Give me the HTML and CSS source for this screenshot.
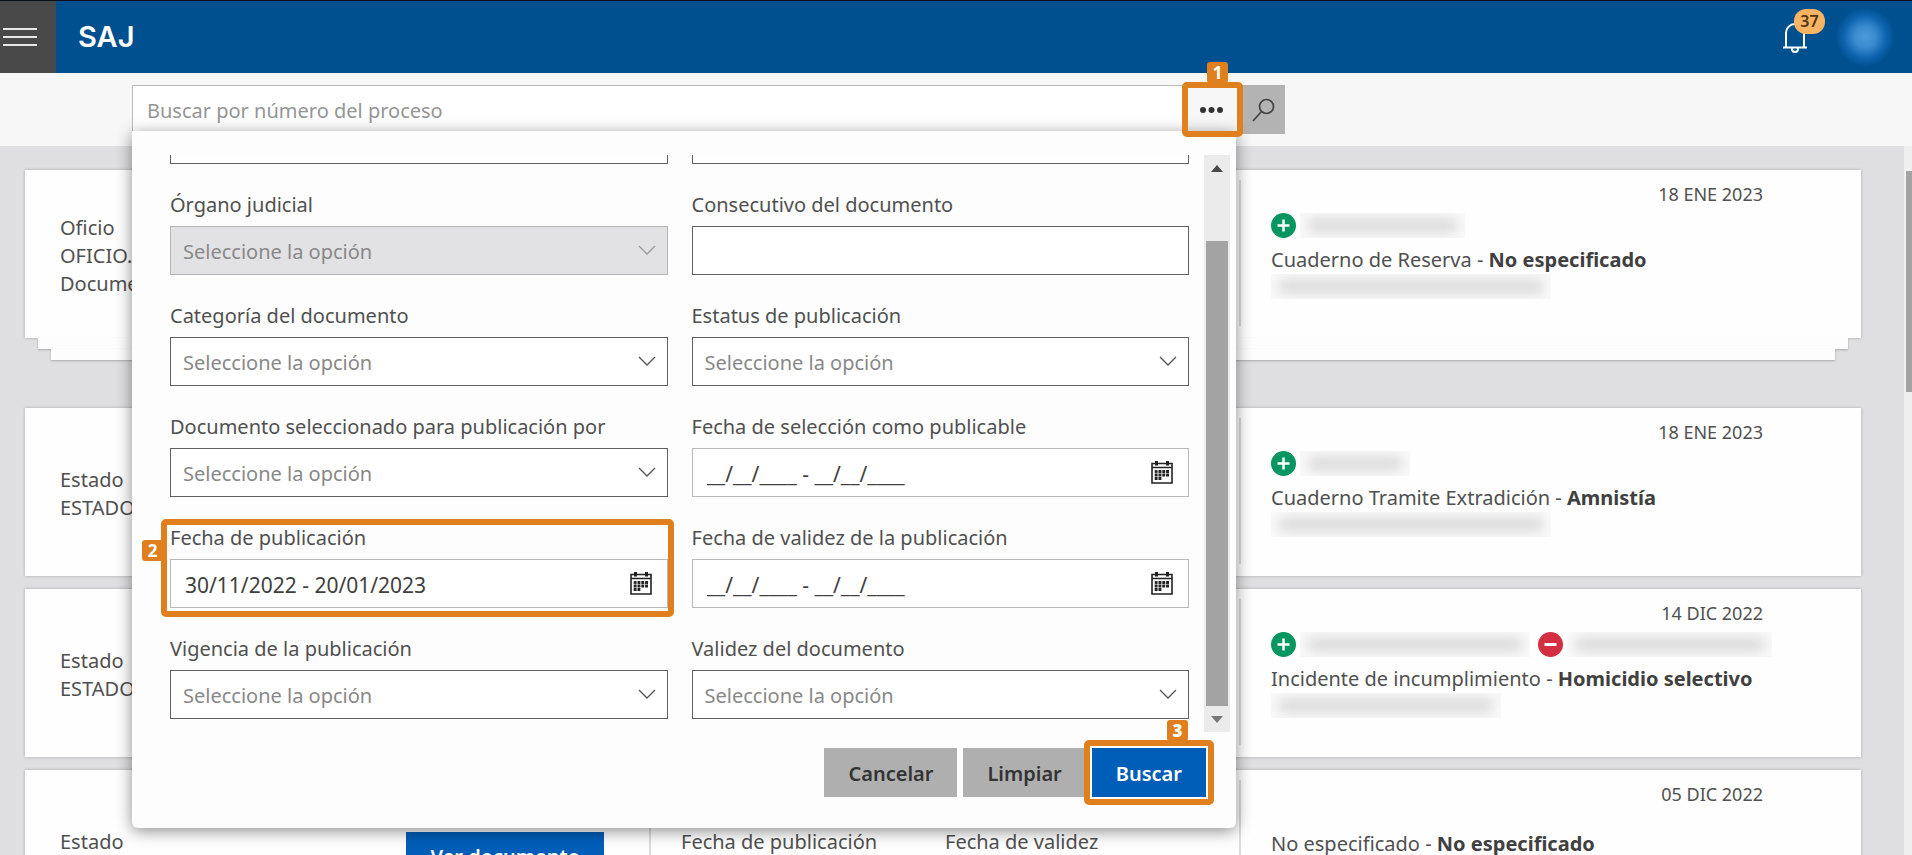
FILE: index.html
```html
<!DOCTYPE html>
<html lang="es">
<head>
    <meta charset="UTF-8">
    <meta name="viewport" content="width=device-width, initial-scale=1.0">
    <title>SAJ</title>
    <link rel="stylesheet" href="styles.css">
</head>
<body>
    <svg class="symbols" aria-hidden="true">
        <symbol id="chevron" viewBox="0 0 18 10">
            <path d="M1 1l8 8 8-8" fill="none" stroke="currentColor" stroke-width="1.3"/>
        </symbol>
        <symbol id="calendar" viewBox="0 0 22 23">
            <path d="M1 2.5h20v19.5H1zM1 6.500h20" fill="none" stroke="currentColor" stroke-width="1.6"/>
            <path d="M4 0h3v4.500H4zM15 0h3v4.500h-3z" fill="currentColor"/>
            <path d="M7.500 10.500h11M3.700 14h14.800M3.700 17.500h7" fill="none" stroke="currentColor" stroke-width="2.800" stroke-dasharray="2.900 0.900"/>
            <path d="M3.700 10.500h2.900" stroke="currentColor" stroke-width="2.800"/>
        </symbol>
        <symbol id="plus" viewBox="0 0 25 25">
            <circle cx="12.5" cy="12.5" r="12.5" fill="#079560"/>
            <path d="M12.5 6.5v12M6.5 12.5h12" stroke="#fff" stroke-width="2.5"/>
        </symbol>
        <symbol id="minus" viewBox="0 0 25 25">
            <circle cx="12.5" cy="12.5" r="12.5" fill="#d32f41"/>
            <path d="M6.5 12.5h12" stroke="#fff" stroke-width="3"/>
        </symbol>
        <symbol id="arrow-up" viewBox="0 0 12 7">
            <path d="M0 7l6-7 6 7z" fill="currentColor"/>
        </symbol>
        <symbol id="arrow-down" viewBox="0 0 12 7">
            <path d="M0 0l6 7 6-7z" fill="currentColor"/>
        </symbol>
    </svg>

    <header class="header">
        <button class="menu-btn" type="button" aria-label="Menú">
            <span class="menu-line"></span>
            <span class="menu-line"></span>
            <span class="menu-line"></span>
        </button>
        <a class="logo" href="#">SAJ</a>
        <div class="header-right">
            <button class="bell" type="button" aria-label="Notificaciones">
                <svg width="24" height="34" viewBox="0 0 24 34" fill="none" stroke="#fff" stroke-width="2">
                    <path d="M3 27V13a9 9 0 0 1 18 0v14M0 27.500h24M12 4V1"/>
                    <path d="M9 28v1a3 3 0 0 0 6 0v-1"/>
                </svg>
                <span class="bell-count">37</span>
            </button>
            <span class="avatar"></span>
        </div>
    </header>

    <div class="toolbar">
        <form class="search">
            <input class="search-input" type="text" placeholder="Buscar por número del proceso" aria-label="Buscar por número del proceso">
            <button class="more-btn" type="button" aria-label="Más filtros">
                <svg width="23" height="6" viewBox="0 0 23 6" fill="#333">
                    <circle cx="3" cy="3" r="3"/><circle cx="11.5" cy="3" r="3"/><circle cx="20" cy="3" r="3"/>
                </svg>
                <span class="mark mark-more"><b class="mark-num">1</b></span>
            </button>
            <button class="search-btn" type="submit" aria-label="Buscar proceso">
                <svg width="24" height="24" viewBox="0 0 24 24" fill="none" stroke="#444" stroke-width="1.7">
                    <circle cx="15.5" cy="8.5" r="7"/>
                    <path d="M10.500 13.500L2 23"/>
                </svg>
            </button>

            <div class="panel">
                <div class="panel-body">
                    <div class="fields">
                        <div class="field">
                            <label for="f1"></label>
                            <input class="box" type="text" id="f1">
                        </div>
                        <div class="field">
                            <label for="f2"></label>
                            <input class="box" type="text" id="f2">
                        </div>
                        <div class="field">
                            <label for="organo">Órgano judicial</label>
                            <div class="control disabled">
                                <select class="box" id="organo" disabled><option>Seleccione la opción</option></select>
                                <svg class="chevron"><use href="#chevron"/></svg>
                            </div>
                        </div>
                        <div class="field">
                            <label for="consecutivo">Consecutivo del documento</label>
                            <input class="box" type="text" id="consecutivo">
                        </div>
                        <div class="field">
                            <label for="categoria">Categoría del documento</label>
                            <div class="control">
                                <select class="box" id="categoria"><option>Seleccione la opción</option></select>
                                <svg class="chevron"><use href="#chevron"/></svg>
                            </div>
                        </div>
                        <div class="field">
                            <label for="estatus">Estatus de publicación</label>
                            <div class="control">
                                <select class="box" id="estatus"><option>Seleccione la opción</option></select>
                                <svg class="chevron"><use href="#chevron"/></svg>
                            </div>
                        </div>
                        <div class="field">
                            <label for="seleccionado">Documento seleccionado para publicación por</label>
                            <div class="control">
                                <select class="box" id="seleccionado"><option>Seleccione la opción</option></select>
                                <svg class="chevron"><use href="#chevron"/></svg>
                            </div>
                        </div>
                        <div class="field">
                            <label for="fecha-seleccion">Fecha de selección como publicable</label>
                            <div class="control">
                                <input class="box date" type="text" id="fecha-seleccion" value="__/__/____ - __/__/____">
                                <button class="cal-btn" type="button" aria-label="Calendario"><svg><use href="#calendar"/></svg></button>
                            </div>
                        </div>
                        <div class="field">
                            <label for="fecha-publicacion">Fecha de publicación</label>
                            <div class="control">
                                <input class="box date" type="text" id="fecha-publicacion" value="30/11/2022 - 20/01/2023">
                                <button class="cal-btn" type="button" aria-label="Calendario"><svg><use href="#calendar"/></svg></button>
                            </div>
                        </div>
                        <div class="field">
                            <label for="fecha-validez">Fecha de validez de la publicación</label>
                            <div class="control">
                                <input class="box date" type="text" id="fecha-validez" value="__/__/____ - __/__/____">
                                <button class="cal-btn" type="button" aria-label="Calendario"><svg><use href="#calendar"/></svg></button>
                            </div>
                        </div>
                        <div class="field">
                            <label for="vigencia">Vigencia de la publicación</label>
                            <div class="control">
                                <select class="box" id="vigencia"><option>Seleccione la opción</option></select>
                                <svg class="chevron"><use href="#chevron"/></svg>
                            </div>
                        </div>
                        <div class="field">
                            <label for="validez">Validez del documento</label>
                            <div class="control">
                                <select class="box" id="validez"><option>Seleccione la opción</option></select>
                                <svg class="chevron"><use href="#chevron"/></svg>
                            </div>
                        </div>
                    </div>
                    <div class="scrollbar">
                        <svg class="arrow"><use href="#arrow-up"/></svg>
                        <span class="thumb"></span>
                        <svg class="arrow arrow-end"><use href="#arrow-down"/></svg>
                    </div>
                    <span class="mark mark-date"><b class="mark-num">2</b></span>
                </div>
                <div class="panel-actions">
                    <button class="btn" type="button">Cancelar</button>
                    <button class="btn" type="button">Limpiar</button>
                    <button class="btn btn-primary" type="submit">Buscar<span class="mark mark-submit"><b class="mark-num">3</b></span></button>
                </div>
            </div>
        </form>
    </div>

    <main class="page">
        <div class="list">
            <article class="card card-stack">
                <div class="card-doc">
                    <p>Oficio<br>OFICIO.<br>Documento</p>
                </div>
                <div class="card-dates"></div>
                <div class="card-info">
                    <time class="card-date">18 ENE 2023</time>
                    <div class="people">
                        <svg class="sign"><use href="#plus"/></svg>
                        <span class="redacted w-165"></span>
                    </div>
                    <p class="case">Cuaderno de Reserva - <b>No especificado</b></p>
                    <span class="redacted w-280"></span>
                </div>
            </article>
            <article class="card">
                <div class="card-doc">
                    <p>Estado<br>ESTADO</p>
                </div>
                <div class="card-dates"></div>
                <div class="card-info">
                    <time class="card-date">18 ENE 2023</time>
                    <div class="people">
                        <svg class="sign"><use href="#plus"/></svg>
                        <span class="redacted w-110"></span>
                    </div>
                    <p class="case">Cuaderno Tramite Extradición - <b>Amnistía</b></p>
                    <span class="redacted w-280"></span>
                </div>
            </article>
            <article class="card">
                <div class="card-doc">
                    <p>Estado<br>ESTADO</p>
                </div>
                <div class="card-dates"></div>
                <div class="card-info">
                    <time class="card-date">14 DIC 2022</time>
                    <div class="people">
                        <svg class="sign"><use href="#plus"/></svg>
                        <span class="redacted w-230"></span>
                        <svg class="sign"><use href="#minus"/></svg>
                        <span class="redacted w-205"></span>
                    </div>
                    <p class="case">Incidente de incumplimiento - <b>Homicidio selectivo</b></p>
                    <span class="redacted w-230"></span>
                </div>
            </article>
            <article class="card">
                <div class="card-doc">
                    <p>Estado<br>ESTADO</p>
                    <button class="btn btn-primary" type="button">Ver documento</button>
                </div>
                <div class="card-dates">
                    <p>Fecha de publicación</p>
                    <p>Fecha de validez</p>
                </div>
                <div class="card-info">
                    <time class="card-date">05 DIC 2022</time>
                    <div class="people people-empty"></div>
                    <p class="case">No especificado - <b>No especificado</b></p>
                </div>
            </article>
        </div>
        <div class="page-scroll">
            <span class="page-thumb"></span>
        </div>
    </main>
</body>
</html>
```
FILE: styles.css
```css
* {
    box-sizing: border-box;
}
body {
    margin: 0;
    height: 100vh;
    overflow: hidden;
    display: flex;
    flex-direction: column;
    font-family: "Noto Sans", "Open Sans", sans-serif;
    font-size: 20px;
    line-height: 28px;
    color: #505050;
    background: #dfdfe1;
}
p {
    margin: 0;
}
button, input, select {
    font: inherit;
    color: inherit;
    margin: 0;
    border: none;
    border-radius: 0;
    background: none;
}
button {
    padding: 0;
    cursor: pointer;
}
.symbols {
    display: none;
}

/* header */
.header {
    flex: none;
    display: flex;
    align-items: stretch;
    height: 73px;
    border-top: 1px solid #0b0f1c;
    background: #004f8e;
}
.menu-btn {
    display: flex;
    flex-direction: column;
    justify-content: center;
    gap: 6px;
    width: 56px;
    padding-left: 3px;
    background: #494949;
}
.menu-line {
    width: 34px;
    height: 2px;
    background: #e8e8e8;
}
.logo {
    align-self: center;
    margin-left: 22px;
    font-family: Inter, sans-serif;
    font-size: 29px;
    font-weight: 600;
    color: #fff;
    text-decoration: none;
}
.header-right {
    display: flex;
    align-items: center;
    gap: 28px;
    margin-left: auto;
    padding-right: 17px;
}
.bell {
    position: relative;
    height: 34px;
    line-height: 0;
}
.bell-count {
    position: absolute;
    top: -11px;
    left: 11px;
    width: 31px;
    border-radius: 12px;
    background: #f8b363;
    color: #4f3517;
    font-size: 16px;
    font-weight: 600;
    line-height: 25px;
}
.avatar {
    width: 60px;
    height: 60px;
    border-radius: 50%;
    background: radial-gradient(closest-side, #4c9ad8, #3a8bcf 35%, #0d65b0 70%, #004f8e);
}

/* search */
.toolbar {
    flex: none;
    position: relative;
    z-index: 2;
    height: 73px;
    padding: 12px 0 0 132px;
    background: #f7f7f7;
}
.search {
    position: relative;
    display: flex;
    height: 49px;
    width: 1153px;
    max-width: 100%;
}
.search-input {
    flex: 1;
    padding: 3px 14px 0;
    border: 1px solid #bbb;
    border-right: none;
    background: #fff;
}
.search-input::placeholder {
    color: #959595;
    opacity: 1;
}
.more-btn {
    position: relative;
    z-index: 1;
    width: 57px;
    line-height: 0;
}
.search-btn {
    width: 45px;
    line-height: 0;
    background: #b3b3b3;
}

/* filter panel */
.panel {
    position: absolute;
    top: 46px;
    left: 0;
    right: 49px;
    padding: 24px 6px 31px 38px;
    border-radius: 0 0 6px 6px;
    background: #fdfdfd;
    box-shadow: 0 3px 16px rgba(0, 0, 0, 0.45);
}
.panel-body {
    position: relative;
    display: flex;
    gap: 15px;
    height: 577px;
}
.fields {
    flex: 1;
    display: grid;
    grid-template-columns: 1fr 1fr;
    gap: 24px;
    align-content: end;
    padding-bottom: 13px;
    overflow: hidden;
}
.field label {
    display: block;
    height: 38px;
    padding-top: 3px;
}
.control {
    position: relative;
}
.box {
    display: block;
    width: 100%;
    height: 49px;
    padding: 2px 12px 0;
    border: 1px solid #606060;
    background: #fff;
}
select.box {
    appearance: none;
    color: #888;
    opacity: 1;
}
.disabled .box {
    border-color: #b5b5b5;
    background: #e2e2e4;
}
.chevron {
    position: absolute;
    top: 19px;
    right: 12px;
    width: 18px;
    height: 10px;
    color: #555;
    pointer-events: none;
}
.disabled .chevron {
    color: #999;
}
.box.date {
    padding-left: 14px;
    border-color: #b8b8b8;
    color: #404040;
    font-size: 21px;
}
.cal-btn {
    position: absolute;
    top: 13px;
    right: 16px;
    line-height: 0;
}
.cal-btn svg {
    width: 22px;
    height: 23px;
    color: #222;
}
.scrollbar {
    display: flex;
    flex-direction: column;
    align-items: center;
    width: 26px;
    padding: 10px 0 9px;
    background: #ebebeb;
}
.arrow {
    flex: none;
    width: 12px;
    height: 7px;
    color: #484848;
}
.arrow-end {
    margin-top: 10px;
    color: #777;
}
.thumb {
    flex: 1;
    width: 22px;
    margin-top: 69px;
    background: #a3a3a3;
}
.panel-actions {
    display: flex;
    justify-content: flex-end;
    gap: 6px;
    margin-top: 16px;
    padding-right: 24px;
}
.btn {
    position: relative;
    height: 49px;
    padding: 2px 24px 0;
    background: #afafb0;
    color: #333;
    font-weight: 600;
}
.btn-primary {
    background: #005eb8;
    color: #fff;
}

/* numbered steps drawn over the controls */
.mark {
    position: absolute;
    border: 6px solid #e07f1e;
    border-radius: 5px;
    pointer-events: none;
}
.mark-num {
    position: absolute;
    width: 21px;
    border-radius: 3px;
    background: #e07f1e;
    color: #fff;
    font-size: 17px;
    line-height: 21px;
    text-align: center;
}
.mark-more {
    inset: -3px -3px -3px -1px;
}
.mark-more .mark-num {
    top: -26px;
    left: 19px;
}
.mark-date {
    top: 364px;
    left: -9px;
    width: calc(50% - 17px);
    height: 98px;
}
.mark-date .mark-num {
    top: 15px;
    left: -25px;
}
.mark-submit {
    inset: -8px;
}
.mark-submit .mark-num {
    top: -26px;
    right: 20px;
}

/* results */
.page {
    flex: 1;
    display: flex;
    min-height: 0;
}
.list {
    flex: 1;
    padding: 24px 43px 0 25px;
}
.card {
    position: relative;
    display: grid;
    grid-template-columns: 624fr 590fr 622fr;
    height: 168px;
    margin-bottom: 13px;
    background: #fefefe;
    box-shadow: 0 0 3px rgba(0, 0, 0, 0.25);
}
.card-stack {
    margin-bottom: 70px;
}
.card-stack::before,
.card-stack::after {
    content: "";
    position: absolute;
    height: 11px;
    background: #fdfdfd;
    box-shadow: 0 1px 2px rgba(0, 0, 0, 0.25);
}
.card-stack::before {
    top: 168px;
    left: 13px;
    right: 13px;
}
.card-stack::after {
    top: 179px;
    left: 26px;
    right: 26px;
}
.card-doc {
    display: flex;
    align-items: center;
    justify-content: space-between;
    padding: 4px 45px 0 35px;
}
.card-dates {
    display: grid;
    grid-template-columns: 264px 1fr;
    margin: 12px 0;
    padding: 46px 0 0 30px;
    border-left: 2px solid #dcdcde;
}
.card-info {
    margin: 10px 0 12px;
    padding: 0 98px 0 30px;
    border-left: 2px solid #dcdcde;
}
.card-date {
    display: block;
    text-align: right;
    font-size: 18px;
}
.people {
    display: flex;
    align-items: center;
    gap: 4px;
    height: 28px;
    margin: 3px -20px 7px 0;
}
.people-empty {
    height: 12px;
}
.sign {
    flex: none;
    width: 25px;
    height: 25px;
}
.redacted + .sign {
    margin-left: 4px;
}
.case {
    white-space: nowrap;
}
.case b {
    color: #404040;
}
.redacted {
    display: block;
    height: 25px;
    padding: 5px 8px;
    overflow: hidden;
    background: #fafafa;
}
.redacted::before {
    content: "";
    display: block;
    height: 15px;
    background: #dcdcdc;
    filter: blur(6px);
}
.w-110 {
    width: 110px;
}
.w-165 {
    width: 165px;
}
.w-205 {
    width: 205px;
}
.w-230 {
    width: 230px;
}
.w-280 {
    width: 280px;
}
.page-scroll {
    width: 8px;
    padding: 25px 0 0 2px;
    background: #efefef;
}
.page-thumb {
    display: block;
    height: 221px;
    background: #a3a3a3;
}
```
